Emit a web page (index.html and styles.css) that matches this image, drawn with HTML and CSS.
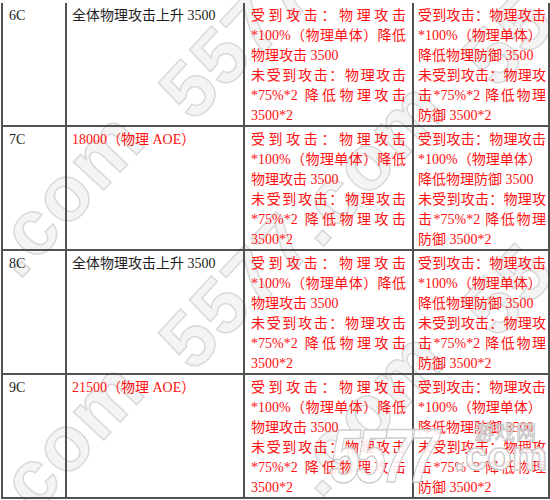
FILE: index.html
```html
<!DOCTYPE html>
<html lang="zh">
<head>
<meta charset="utf-8">
<title>表</title>
<link rel="stylesheet" href="styles.css">
</head>
<body>
<div class="page">
  <div class="wm">
    <span class="wm-word w1">.com</span>
    <span class="wm-word w2">55</span>
    <span class="wm-word w3">77</span>
    <span class="wm-word w4">.com</span>
    <span class="wm-word w5">55</span>
    <span class="wm-word w6">77</span>
    <span class="wm-word w7">.com</span>
    <span class="wm-word w8">55</span>
    <span class="wm-word w9">.com</span>
    <span class="wm-word w10">55</span>
  </div>

  <div class="table">
    <div class="row">
      <div class="cell c1">6C</div>
      <div class="cell c2">全体物理攻击上升 3500</div>
      <div class="cell c3 red">
        <span class="ln j">受到攻击：物理攻击</span>
        <span class="ln j">*100%（物理单体）降低</span>
        <span class="ln">物理攻击 3500</span>
        <span class="ln j">未受到攻击：物理攻击</span>
        <span class="ln j">*75%*2 降低物理攻击</span>
        <span class="ln">3500*2</span>
      </div>
      <div class="cell c4 red">
        <span class="ln j">受到攻击：物理攻击</span>
        <span class="ln">*100%（物理单体）</span>
        <span class="ln">降低物理防御 3500</span>
        <span class="ln j">未受到攻击：物理攻</span>
        <span class="ln j">击*75%*2 降低物理</span>
        <span class="ln">防御 3500*2</span>
      </div>
    </div>

    <div class="row">
      <div class="cell c1">7C</div>
      <div class="cell c2 red">18000（物理 AOE）</div>
      <div class="cell c3 red">
        <span class="ln j">受到攻击：物理攻击</span>
        <span class="ln j">*100%（物理单体）降低</span>
        <span class="ln">物理攻击 3500</span>
        <span class="ln j">未受到攻击：物理攻击</span>
        <span class="ln j">*75%*2 降低物理攻击</span>
        <span class="ln">3500*2</span>
      </div>
      <div class="cell c4 red">
        <span class="ln j">受到攻击：物理攻击</span>
        <span class="ln">*100%（物理单体）</span>
        <span class="ln">降低物理防御 3500</span>
        <span class="ln j">未受到攻击：物理攻</span>
        <span class="ln j">击*75%*2 降低物理</span>
        <span class="ln">防御 3500*2</span>
      </div>
    </div>

    <div class="row">
      <div class="cell c1">8C</div>
      <div class="cell c2">全体物理攻击上升 3500</div>
      <div class="cell c3 red">
        <span class="ln j">受到攻击：物理攻击</span>
        <span class="ln j">*100%（物理单体）降低</span>
        <span class="ln">物理攻击 3500</span>
        <span class="ln j">未受到攻击：物理攻击</span>
        <span class="ln j">*75%*2 降低物理攻击</span>
        <span class="ln">3500*2</span>
      </div>
      <div class="cell c4 red">
        <span class="ln j">受到攻击：物理攻击</span>
        <span class="ln">*100%（物理单体）</span>
        <span class="ln">降低物理防御 3500</span>
        <span class="ln j">未受到攻击：物理攻</span>
        <span class="ln j">击*75%*2 降低物理</span>
        <span class="ln">防御 3500*2</span>
      </div>
    </div>

    <div class="row">
      <div class="cell c1">9C</div>
      <div class="cell c2 red">21500（物理 AOE）</div>
      <div class="cell c3 red">
        <span class="ln j">受到攻击：物理攻击</span>
        <span class="ln j">*100%（物理单体）降低</span>
        <span class="ln">物理攻击 3500</span>
        <span class="ln j">未受到攻击：物理攻击</span>
        <span class="ln j">*75%*2 降低物理攻击</span>
        <span class="ln">3500*2</span>
      </div>
      <div class="cell c4 red">
        <span class="ln j">受到攻击：物理攻击</span>
        <span class="ln">*100%（物理单体）</span>
        <span class="ln">降低物理防御 3500</span>
        <span class="ln j">未受到攻击：物理攻</span>
        <span class="ln j">击*75%*2 降低物理</span>
        <span class="ln">防御 3500*2</span>
      </div>
    </div>
  </div>

  <div class="logo">
    <span class="logo-num">5577</span>
    <span class="logo-cn">游戏网</span>
    <span class="logo-com">.com</span>
  </div>
</div>
</body>
</html>
```

FILE: styles.css
```css
html, body {
  margin: 0;
  padding: 0;
  background: #ffffff;
}

body {
  font-family: "Liberation Serif", "Noto Sans CJK SC", serif;
  font-size: 14px;
  line-height: 20px;
  color: #1e1e1e;
}

.page {
  position: relative;
  width: 550px;
  height: 500px;
  overflow: hidden;
}

/* diagonal watermark, each word placed by its centre */
.wm {
  position: absolute;
  inset: 0;
  z-index: 0;
  pointer-events: none;
}

.wm-word {
  position: absolute;
  white-space: nowrap;
  font-family: "Liberation Sans", sans-serif;
  font-weight: bold;
  font-size: 78px;
  line-height: 78px;
  letter-spacing: 2px;
  color: #f4f4f4;
  -webkit-text-stroke: 1.5px #d9d9d9;
  transform: translate(-50%, -50%) rotate(-47deg);
}

.w1  { left: 64px;  top: 193px; }
.w2  { left: 205px; top: 72px; }
.w3  { left: 268px; top: 9px; }
.w4  { left: 64px;  top: 443px; }
.w5  { left: 205px; top: 322px; }
.w6  { left: 268px; top: 259px; }
.w7  { left: 365px; top: 162px; }
.w8  { left: 508px; top: 39px; }
.w9  { left: 365px; top: 412px; }
.w10 { left: 508px; top: 289px; }

/* table */
.table {
  position: relative;
  z-index: 1;
  margin: 3px 0 0 1px;
  width: 549px;
  box-sizing: border-box;
  border-left: 2px solid #515151;
  border-right: 2px solid #515151;
}

.row {
  display: grid;
  grid-template-columns: 64px 178px 169px 1fr;
  height: 124px;
  box-sizing: border-box;
  border-bottom: 2px solid #515151;
}

.cell {
  box-sizing: border-box;
  border-right: 2px solid #515151;
  padding: 3px 6px 0 6px;
  overflow: hidden;
}

.c1 { padding-left: 6px; }
.c2 { padding-left: 5px; }
.c4 {
  border-right: none;
  padding: 3px 2px 0 4px;
}

.red { color: #ff1010; }

.ln {
  display: block;
  white-space: nowrap;
}

.j {
  text-align: justify;
  text-align-last: justify;
}

/* bottom-right logo watermark */
.logo {
  position: absolute;
  z-index: 2;
  left: 330px;
  top: 416px;
  width: 220px;
  height: 84px;
  pointer-events: none;
}

.logo-num {
  position: absolute;
  left: 0;
  top: 0;
  font-family: "Liberation Sans", sans-serif;
  font-weight: bold;
  font-style: italic;
  font-size: 76px;
  line-height: 80px;
  letter-spacing: -6px;
  transform: scaleX(0.72);
  transform-origin: 0 0;
  color: rgba(255, 255, 255, 0.85);
  -webkit-text-stroke: 1.5px rgba(200, 200, 200, 0.9);
}

.logo-cn {
  position: absolute;
  left: 144px;
  top: 4px;
  font-family: "Noto Sans CJK SC", sans-serif;
  font-size: 20px;
  line-height: 24px;
  letter-spacing: 1px;
  color: rgba(255, 255, 255, 0.85);
  -webkit-text-stroke: 1px rgba(190, 190, 190, 0.9);
}

.logo-com {
  position: absolute;
  left: 124px;
  top: 18px;
  font-family: "Liberation Sans", sans-serif;
  font-weight: bold;
  font-size: 40px;
  line-height: 44px;
  color: rgba(255, 255, 255, 0.85);
  -webkit-text-stroke: 1.5px rgba(200, 200, 200, 0.9);
}
```
